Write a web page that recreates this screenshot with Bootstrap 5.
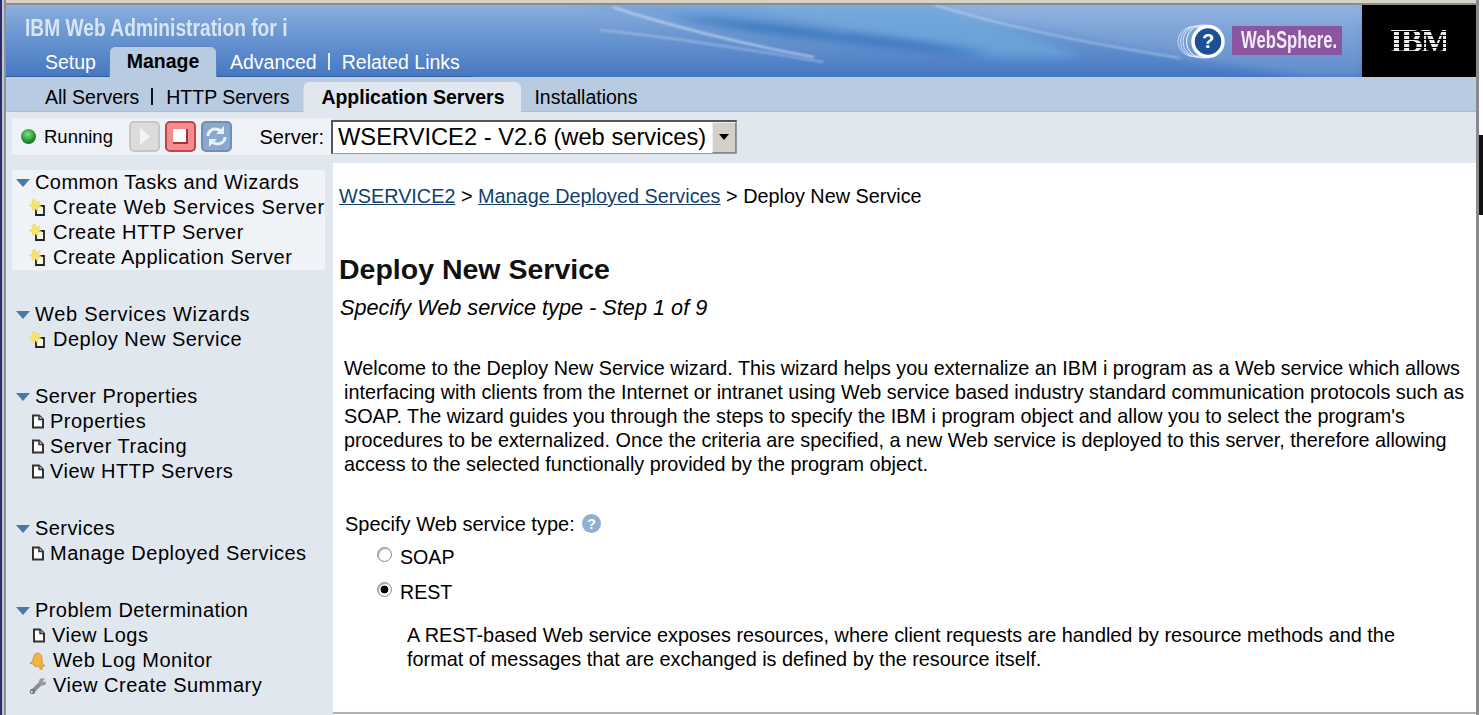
<!doctype html>
<html lang="en">
<head>
<meta charset="utf-8">
<title>IBM Web Administration for i</title>
<link rel="stylesheet" href="https://cdn.jsdelivr.net/npm/bootstrap@5.3.0/dist/css/bootstrap.min.css">
<style>
html,body{height:715px;overflow:hidden;background:#fff}
body{font-family:"Liberation Sans",Arial,sans-serif;font-size:20px;line-height:25px;color:#000}
.desk{height:715px;width:1483px}
.edge-l{width:6px;flex:none;background:linear-gradient(90deg,#2a2c66 0 2px,#c4c5d2 2px 4px,#8d8f9c 4px 6px)}
.edge-r{width:7px;flex:none;background:linear-gradient(90deg,#8a8a8a 0 3px,transparent 3px),linear-gradient(180deg,#fff 0 135px,#111 135px 215px,#fff 215px)}
.appwin{width:1470px;flex:none}
.chrome-top{height:5px;flex:none;background:linear-gradient(180deg,#d6d2c8 0 3px,#8d8d88 3px 5px)}
.banner-row{height:72px;flex:none}
.banner{background:linear-gradient(180deg,#8eb0de 0,#6f9ad2 35%,#4577c3 100%);overflow:hidden}
.swoosh{position:absolute;inset:0;width:100%;height:100%}
.soft{filter:blur(1px)}
.softer{filter:blur(4px)}
.ibm-box{width:114px;flex:none;background:#000}
.ibm-word{font:bold 33px/26px "Liberation Serif",serif;letter-spacing:-2px;width:56px;margin-right:2px;background:repeating-linear-gradient(180deg,#eee 0 2.6px,#000 2.6px 4px);-webkit-background-clip:text;background-clip:text;color:transparent}
.app-title{position:relative;font:bold 23px/26px "Liberation Sans",sans-serif;color:#d9e4f2;padding:10px 0 0 19px;height:41px;white-space:nowrap}
.app-title span,.ws-word{display:inline-block;transform-origin:0 50%}
.app-title span{transform:scaleX(.835)}
.ws-badge{left:1226px;top:21px;width:110px;height:29px;background:#8c559f;color:#f4e9f6;font:bold 23px/29px "Liberation Sans",sans-serif;padding-left:9px;white-space:nowrap}
.ws-word{transform:scaleX(.726)}
.help-mark{left:1168px;top:18px}
.main-tabs{position:relative;width:467px;height:31px;padding-left:39px;border-bottom:1px solid #2f5c9f}
.main-tabs .nav-link{padding:0;color:#fff;font-size:19.5px;line-height:28px}
.main-tabs .nav-link.on{background:#b8cbe0;color:#000;font-weight:700;border:1px solid #5d86bd;border-bottom:0;border-radius:6px 6px 0 0;width:108px;text-align:center;margin:0 13px;height:31px;line-height:28px}
.pipe{width:2px;height:17px;flex:none}
.pipe-w{background:#e6eef8;margin:0 12px 0 11px}
.pipe-k{background:#111;margin:11px 13px 0 12px}
.sub-row{height:35px;flex:none;background:#b8cbe0;padding-left:39px;border-bottom:1px solid #a9bfd8}
.sub-row .nav-link{padding:0;color:#000;font-size:19.5px;line-height:40px}
.sub-row .nav-link.on{background:#e0e7ef;font-weight:700;width:218px;height:30px;line-height:30px;margin:5px 13px 0 14px;text-align:center;border-radius:6px 6px 0 0;border-left:1px solid #c9d6e5}
.tool-row{height:51px;flex:none;background:#e0e7ef;padding:6px 0 8px 6px}
.tool-band{background:#eef1f6;height:37px;width:319px;padding-left:9px}
.led{width:15px;height:15px;flex:none;border-radius:50%;background:radial-gradient(circle at 45% 35%,#7fe27f,#1b8a2a 60%,#0b4d18);margin-right:8px}
.state{width:85px;font-size:18.5px}
.tool-btn{width:31px;height:31px;border-radius:5px;margin-right:5px;padding:0;display:flex;align-items:center;justify-content:center;border:2px solid}
.b-play{background:#dcdcdc;border-color:#c6c6c6}
.b-stop{background:#f58b8f;border-color:#c0454c}
.b-ref{background:#8aa8cb;border-color:#6f8fb6}
.srv-label{margin:1px 7px 0 0;white-space:nowrap}
.srv-pick{width:406px;height:34px;border:1px solid #9a9a9a;border-top:2px solid #555;border-left:2px solid #555;background:#fff}
.srv-pick select{appearance:none;-webkit-appearance:none;border:0;outline:0;background:#fff;color:#000;font-family:inherit;font-size:23.7px;line-height:30px;padding:0 0 0 5px;height:30px;min-width:0}
.srv-arrow{width:24px;flex:none;background:#d4d0c8;border:1px solid #888;border-top-color:#eee;border-left-color:#eee;display:flex;align-items:center;justify-content:center}
.srv-arrow i{border:5px solid transparent;border-top:6px solid #000;border-bottom:0;display:block}
.body-row{flex:1 1 auto;min-height:0}
.side{width:327px;flex:none;background:#e0e7ef;padding:7px 0 0 6px}
.side-group{width:313px;margin-bottom:32px}
.side-group.first{background:#eff2f7}
.side-head{height:25px;padding-left:4px;white-space:nowrap;letter-spacing:.42px}
.side-head svg{margin-right:5px;flex:none}
.side-item{height:25px;white-space:nowrap;padding-left:17px;letter-spacing:.5px}
.side-item svg{flex:none}
.side-group .ls-w{letter-spacing:.72px}
.ic-new{margin-right:6px;width:18px}
.ic-doc{margin:0 5px 0 2px;width:14px}
.ic-doc2{margin:0 6px 0 3px;width:14px}
.main-pane{background:#fff;padding:21px 0 0 6px;border-bottom:2px solid #a7b3c0;height:551px;min-width:0}
.crumbs{height:25px;font-size:19.83px}
.crumbs a{color:#123f6e}
.pg-title{font-size:28.5px;font-weight:700;line-height:32px;margin:44px 0 0;color:#111}
.pg-sub{font-style:italic;font-size:21.7px;line-height:25px;margin:10px 0 0 1px}
.intro{margin:36px 0 0 5px;line-height:24px;font-size:19.8px;width:1125px}
.ask{margin:36px 0 0 6px;line-height:25px;font-size:20px}
.ask svg{margin:0 0 5px 2px}
.opt{height:25px;margin:7px 0 0 38px;font-size:19.6px}
.opt.next{margin-top:10px}
.opt .form-check-input{width:15px;height:15px;margin:-6px 8px 0 0;flex:none;border:1px solid #8b8b8b;background-color:#fff;box-shadow:inset 1px 1px 1px #aaa}
.opt .form-check-input:checked{background-color:#fff;border-color:#8b8b8b;background-image:radial-gradient(circle,#000 0 3.6px,transparent 4.2px)}
.opt-note{margin:18px 0 0 68px;width:1010px;line-height:24px;font-size:19.85px}
</style>
</head>
<body>
<svg width="0" height="0" class="position-absolute">
<defs>
<symbol id="tri" viewBox="0 0 14 8"><path d="M0 0H14L7 8Z" fill="#4d77a8"/></symbol>
<symbol id="doc" viewBox="0 0 14 15"><path d="M2 1.500H8L12 5.500V13.500H2Z" fill="#fff" stroke="#333" stroke-width="2"/><path d="M8 1.500V5.500H12" fill="#ccc" stroke="#333" stroke-width="1.500"/></symbol>
<symbol id="new" viewBox="0 0 18 17"><path d="M7 7H15V16H7Z" fill="#f6f3e4" stroke="#222" stroke-width="1.800"/><path d="M6 0 7.500 3.500 11 2 9.500 5.500 12.500 7.500 9 8 8.500 12 6 9.500 3 11.500 3.500 8 0 6.500 3.500 5 3 1.500Z" fill="#f6e46a" stroke="#ecd85e" stroke-width=".6"/></symbol>
<symbol id="bell" viewBox="0 0 18 18"><path d="M8 1C11.500 1 13 3.500 13 7V11L16 14H10C8 16 5 14 3 11.500L1 11.500C3.500 9.500 4 8 4.500 5.500 5 3 6 1.500 8 1Z" fill="#f0b63e" stroke="#c98a1e" stroke-width=".8"/><circle cx="12" cy="16" r="2" fill="#e9a630"/></symbol>
<symbol id="wrench" viewBox="0 0 20 18"><path d="M4 15 14 5" stroke="#8c8c8c" stroke-width="4.500" stroke-linecap="round"/><circle cx="15" cy="4.500" r="4" fill="#9a9a9a"/><circle cx="3.800" cy="15" r="3" fill="#777"/><path d="M15 4.500 18 0 20 4Z" fill="#e0e7ef"/><circle cx="3" cy="15.500" r="1.200" fill="#e0e7ef"/></symbol>
</defs>
</svg>
<div class="desk d-flex">
  <div class="edge-l"></div>
  <div class="appwin d-flex flex-column">
    <div class="chrome-top"></div>
    <div class="banner-row d-flex">
      <header class="banner flex-grow-1 position-relative">
        <svg class="swoosh" viewBox="0 0 1356 72" preserveAspectRatio="none" aria-hidden="true">
          <path class="softer" d="M741 0H929L1080 52H985C900 35 830 18 741 0Z" fill="#6ea8dc" opacity=".75"/>
          <path class="softer" d="M560 0H741L860 30 700 18Z" fill="#5f97d4" opacity=".55"/>
          <path class="softer" d="M929 0H1356V72H1300L1174 53Z" fill="#9fbde4" opacity=".3"/>
          <path class="softer" d="M661 12C720 14 780 20 826 28 890 34 950 42 987 48 960 50 880 42 817 34 770 30 730 24 661 12Z" fill="#2f6fba" opacity=".85"/>
          <path class="soft" d="M607 2C660 20 740 40 808 52" stroke="#d3e2f4" stroke-width="2" fill="none" opacity=".75"/>
          <path class="soft" d="M594 25C680 34 750 46 817 57" stroke="#bcd4ee" stroke-width="2" fill="none" opacity=".55"/>
          <path class="soft" d="M929 0C1000 22 1090 40 1174 53" stroke="#dbe7f6" stroke-width="1.500" fill="none" opacity=".6"/>
        </svg>
        <div class="app-title"><span>IBM Web Administration for i</span></div>
        <ul class="nav main-tabs align-items-center">
          <li class="nav-item"><a class="nav-link" href="#">Setup</a></li>
          <li class="nav-item"><a class="nav-link on" href="#">Manage</a></li>
          <li class="nav-item"><a class="nav-link" href="#">Advanced</a></li>
          <li class="pipe pipe-w"></li>
          <li class="nav-item"><a class="nav-link" href="#">Related Links</a></li>
        </ul>
        <svg class="help-mark position-absolute" width="56" height="37" viewBox="0 0 56 37" aria-hidden="true">
          <g fill="none" stroke="#dfeaf7">
            <circle cx="19" cy="18.500" r="15" stroke-width=".8"/><circle cx="22" cy="18.500" r="15.500" stroke-width=".9"/><circle cx="25" cy="18.500" r="16" stroke-width="1"/><circle cx="29" cy="18.500" r="16.500" stroke-width="1.200"/>
          </g>
          <circle cx="34" cy="18.500" r="15" fill="#1d4f94" stroke="#fff" stroke-width="3.500"/>
          <text x="34" y="25" font-family="Liberation Sans" font-weight="700" font-size="20" fill="#fff" text-anchor="middle">?</text>
        </svg>
        <div class="ws-badge position-absolute"><span class="ws-word">WebSphere.</span></div>
      </header>
      <div class="ibm-box d-flex align-items-center justify-content-center"><div class="ibm-word">IBM</div></div>
    </div>
    <ul class="nav sub-row align-items-start flex-nowrap">
      <li class="nav-item"><a class="nav-link" href="#">All Servers</a></li>
      <li class="pipe pipe-k"></li>
      <li class="nav-item"><a class="nav-link" href="#">HTTP Servers</a></li>
      <li class="nav-item"><a class="nav-link on" href="#">Application Servers</a></li>
      <li class="nav-item"><a class="nav-link" href="#">Installations</a></li>
    </ul>
    <div class="tool-row d-flex">
      <div class="tool-band d-flex align-items-center">
        <span class="led"></span>
        <span class="state">Running</span>
        <button class="tool-btn b-play" type="button" aria-label="Start"><svg width="12" height="17" viewBox="0 0 12 17"><path d="M1 0 11 8.500 1 17Z" fill="#f4f4f4"/></svg></button>
        <button class="tool-btn b-stop" type="button" aria-label="Stop"><svg width="15" height="15" viewBox="0 0 15 15"><path d="M0 0H15V15H0Z" fill="#a8323a"/><path d="M0 0H13V13H0Z" fill="#fff"/></svg></button>
        <button class="tool-btn b-ref" type="button" aria-label="Refresh"><svg width="23" height="23" viewBox="0 0 23 23" fill="none" stroke="#e8eff7" stroke-width="3"><path d="M3 11C3 6 8 3 13 4.500L17 7"/><path d="M20 12C20 17 15 20 10 18.500L6 16"/><path d="M19 1V9H11Z" fill="#e8eff7" stroke="none"/><path d="M4 22V14H12Z" fill="#e8eff7" stroke="none"/></svg></button>
        <span class="srv-label ms-auto">Server:</span>
      </div>
      <div class="d-flex align-items-center">
        <div class="srv-pick d-flex">
          <select class="flex-grow-1" aria-label="Server"><option>WSERVICE2 - V2.6 (web services)</option></select>
          <div class="srv-arrow"><i></i></div>
        </div>
      </div>
    </div>
    <div class="body-row d-flex align-items-start">
      <nav class="side align-self-stretch">
        <div class="side-group first">
          <div class="side-head d-flex align-items-center"><svg width="14" height="8"><use href="#tri"/></svg>Common Tasks and Wizards</div>
          <div class="side-item ls-w d-flex align-items-center"><svg class="ic-new" height="17"><use href="#new"/></svg>Create Web Services Server</div>
          <div class="side-item d-flex align-items-center"><svg class="ic-new" height="17"><use href="#new"/></svg>Create HTTP Server</div>
          <div class="side-item d-flex align-items-center"><svg class="ic-new" height="17"><use href="#new"/></svg>Create Application Server</div>
        </div>
        <div class="side-group">
          <div class="side-head ls-w d-flex align-items-center"><svg width="14" height="8"><use href="#tri"/></svg>Web Services Wizards</div>
          <div class="side-item d-flex align-items-center"><svg class="ic-new" height="17"><use href="#new"/></svg>Deploy New Service</div>
        </div>
        <div class="side-group">
          <div class="side-head d-flex align-items-center"><svg width="14" height="8"><use href="#tri"/></svg>Server Properties</div>
          <div class="side-item d-flex align-items-center"><svg class="ic-doc" height="15"><use href="#doc"/></svg>Properties</div>
          <div class="side-item d-flex align-items-center"><svg class="ic-doc" height="15"><use href="#doc"/></svg>Server Tracing</div>
          <div class="side-item d-flex align-items-center"><svg class="ic-doc" height="15"><use href="#doc"/></svg>View HTTP Servers</div>
        </div>
        <div class="side-group">
          <div class="side-head d-flex align-items-center"><svg width="14" height="8"><use href="#tri"/></svg>Services</div>
          <div class="side-item d-flex align-items-center"><svg class="ic-doc" height="15"><use href="#doc"/></svg>Manage Deployed Services</div>
        </div>
        <div class="side-group">
          <div class="side-head d-flex align-items-center"><svg width="14" height="8"><use href="#tri"/></svg>Problem Determination</div>
          <div class="side-item d-flex align-items-center"><svg class="ic-doc2" height="15"><use href="#doc"/></svg>View Logs</div>
          <div class="side-item d-flex align-items-center"><svg class="ic-new" height="18"><use href="#bell"/></svg>Web Log Monitor</div>
          <div class="side-item d-flex align-items-center"><svg class="ic-new" height="18"><use href="#wrench"/></svg>View Create Summary</div>
        </div>
      </nav>
      <main class="main-pane flex-grow-1">
        <div class="crumbs"><a href="#">WSERVICE2</a> &gt; <a href="#">Manage Deployed Services</a> &gt; Deploy New Service</div>
        <h1 class="pg-title">Deploy New Service</h1>
        <p class="pg-sub">Specify Web service type - Step 1 of 9</p>
        <p class="intro">Welcome to the Deploy New Service wizard. This wizard helps you externalize an IBM i program as a Web service which allows interfacing with clients from the Internet or intranet using Web service based industry standard communication protocols such as SOAP. The wizard guides you through the steps to specify the IBM i program object and allow you to select the program's procedures to be externalized. Once the criteria are specified, a new Web service is deployed to this server, therefore allowing access to the selected functionally provided by the program object.</p>
        <div class="ask">Specify Web service type: <svg width="19" height="19" viewBox="0 0 19 19"><circle cx="9.500" cy="9.500" r="9.500" fill="#8fb0d2"/><text x="9.500" y="15" font-family="Liberation Sans" font-weight="700" font-size="14" fill="#fff" text-anchor="middle">?</text></svg></div>
        <div class="opt form-check d-flex align-items-center p-0"><input class="form-check-input" type="radio" name="svc" id="soap"><label for="soap">SOAP</label></div>
        <div class="opt next form-check d-flex align-items-center p-0"><input class="form-check-input" type="radio" name="svc" id="rest" checked><label for="rest">REST</label></div>
        <p class="opt-note">A REST-based Web service exposes resources, where client requests are handled by resource methods and the format of messages that are exchanged is defined by the resource itself.</p>
      </main>
    </div>
  </div>
  <div class="edge-r"></div>
</div>
<script src="https://cdn.jsdelivr.net/npm/bootstrap@5.3.0/dist/js/bootstrap.bundle.min.js"></script>
</body>
</html>
